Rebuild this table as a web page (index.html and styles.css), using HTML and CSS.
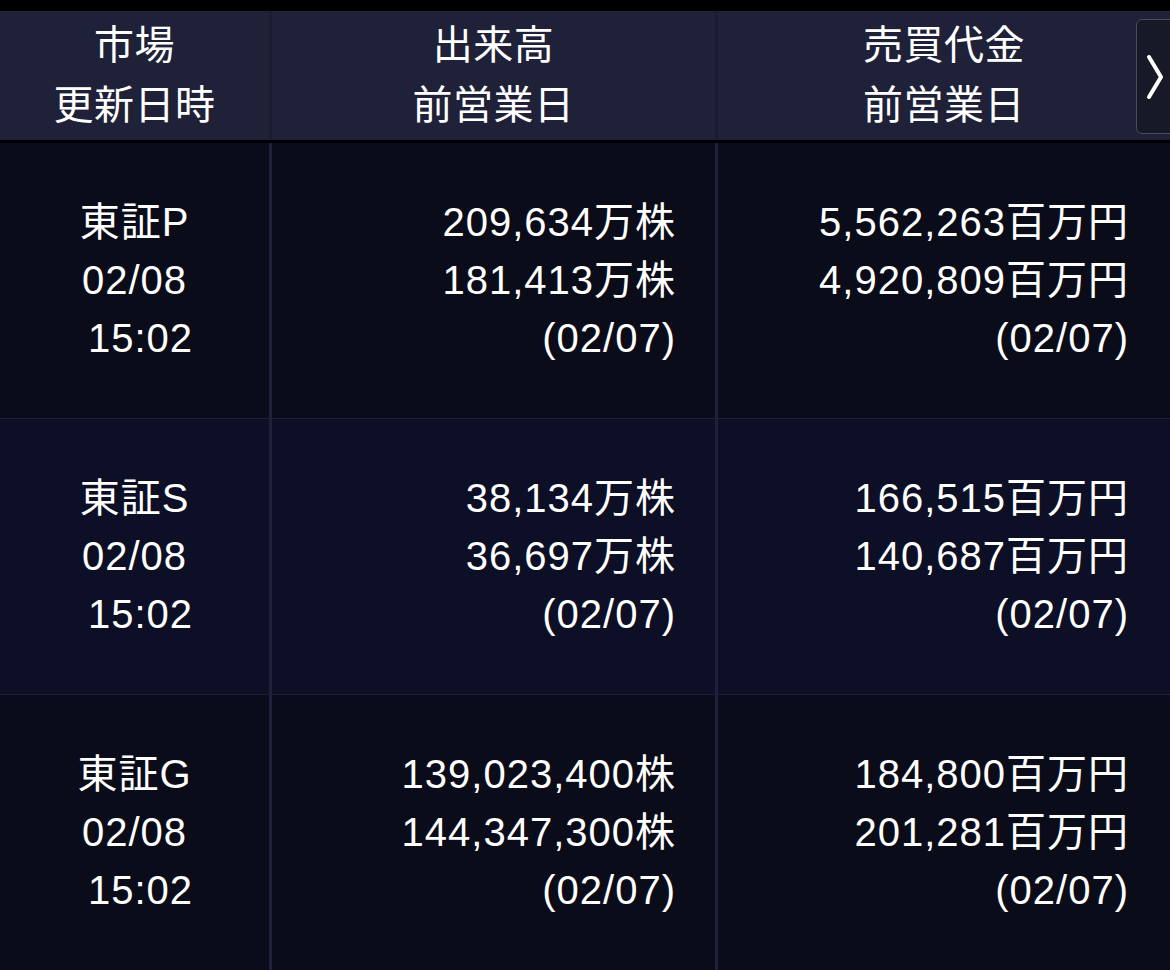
FILE: index.html
```html
<!DOCTYPE html>
<html lang="ja">
<head>
<meta charset="utf-8">
<title>市場 出来高 売買代金</title>
<link rel="stylesheet" href="styles.css">
</head>
<body>
<div class="screen">
  <div class="topbar"></div>
  <div class="header">
    <div class="hcell">市場<br>更新日時</div>
    <div class="hcell">出来高<br>前営業日</div>
    <div class="hcell">売買代金<br>前営業日</div>
    <button class="next" aria-label="次へ">
      <svg width="20" height="48" viewBox="0 0 20 48"><path d="M4 4 L16 24 L4 44" fill="none" stroke="#fff" stroke-width="4" stroke-linecap="round" stroke-linejoin="round"/></svg>
    </button>
  </div>
  <div class="hline"></div>
  <div class="body">
    <div class="row odd">
      <div class="cell market">東証P<br>02/08<br>&nbsp;15:02</div>
      <div class="cell num">209,634万株<br>181,413万株<br>(02/07)</div>
      <div class="cell num last">5,562,263百万円<br>4,920,809百万円<br>(02/07)</div>
    </div>
    <div class="row even">
      <div class="cell market">東証S<br>02/08<br>&nbsp;15:02</div>
      <div class="cell num">38,134万株<br>36,697万株<br>(02/07)</div>
      <div class="cell num last">166,515百万円<br>140,687百万円<br>(02/07)</div>
    </div>
    <div class="row odd">
      <div class="cell market">東証G<br>02/08<br>&nbsp;15:02</div>
      <div class="cell num">139,023,400株<br>144,347,300株<br>(02/07)</div>
      <div class="cell num last">184,800百万円<br>201,281百万円<br>(02/07)</div>
    </div>
  </div>
</div>
</body>
</html>
```
FILE: styles.css
```css
html, body {
  margin: 0;
  padding: 0;
  background: #0a0c1a;
}
.screen {
  width: 1170px;
  height: 970px;
  overflow: hidden;
  display: flex;
  flex-direction: column;
  font-family: "Liberation Sans", "Noto Sans CJK JP", sans-serif;
  color: #ffffff;
  font-size: 40px;
}
.topbar {
  height: 11px;
  background: #000;
  flex: none;
}
.header {
  position: relative;
  height: 129px;
  flex: none;
  display: grid;
  grid-template-columns: 269px 443px 1fr;
  column-gap: 3px;
  background: #1a1c32;
}
.hcell {
  background: #1f2139;
  display: flex;
  align-items: center;
  justify-content: center;
  text-align: center;
  line-height: 60px;
  padding-bottom: 2px;
  letter-spacing: 0.5px;
}
.hline {
  height: 3px;
  background: #000;
  flex: none;
}
.next {
  position: absolute;
  left: 1136px;
  top: 8px;
  width: 50px;
  height: 115px;
  box-sizing: border-box;
  border: 1px solid #4a4c5d;
  border-radius: 6px;
  background: #181927;
  padding: 0 0 0 8px;
  margin: 0;
  display: flex;
  align-items: center;
  justify-content: flex-start;
}
.body {
  flex: 1;
  display: flex;
  flex-direction: column;
}
.row {
  height: 275px;
  flex: none;
  display: grid;
  grid-template-columns: 269px 443px 1fr;
  column-gap: 3px;
  background: #1d2038;
}
.row + .row {
  border-top: 1px solid #1c1f3a;
}
.odd .cell { background: #0a0c1a; }
.even .cell { background: #0c0f25; }
.cell {
  display: flex;
  flex-direction: column;
  justify-content: center;
  line-height: 58px;
  white-space: nowrap;
  letter-spacing: 1px;
}
.market {
  text-align: center;
  padding-bottom: 2px;
}
.num {
  text-align: right;
  padding-right: 39px;
  padding-bottom: 2px;
}
.num.last {
  padding-right: 41px;
}
```
